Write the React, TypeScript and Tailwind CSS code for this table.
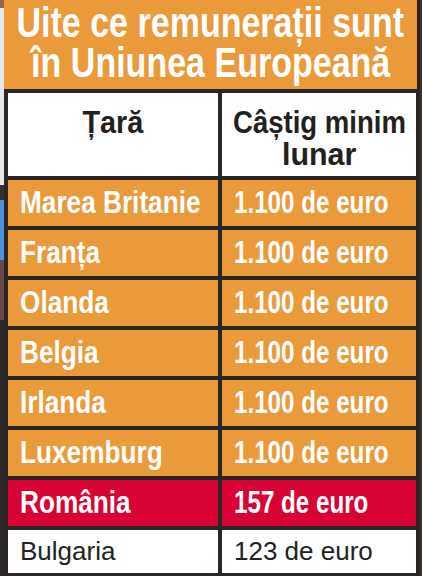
import { Fragment } from "react";

const rows = [
  { country: "Marea Britanie", wage: "1.100 de euro" },
  { country: "Franța", wage: "1.100 de euro" },
  { country: "Olanda", wage: "1.100 de euro" },
  { country: "Belgia", wage: "1.100 de euro" },
  { country: "Irlanda", wage: "1.100 de euro" },
  { country: "Luxemburg", wage: "1.100 de euro" },
];

// no condensed face installed, so squeeze the bold sans horizontally
function Cell({ text, bg, wage }: { text: string; bg: string; wage?: boolean }) {
  return (
    <div
      className={`flex items-center overflow-hidden pl-[12px] font-['Liberation_Sans',Arial,sans-serif] text-[31px] font-bold text-white ${bg}`}
    >
      <span
        className={
          wage
            ? "inline-block origin-left scale-x-[0.78] whitespace-nowrap"
            : "inline-block origin-left scale-x-[0.845] whitespace-nowrap"
        }
      >
        {text}
      </span>
    </div>
  );
}

export default function App() {
  return (
    <div className="flex h-[576px] w-[422px] overflow-hidden bg-[#2b2624]">
      {/* photo edge on the left */}
      <div className="flex w-[4px] flex-col">
        <div className="h-[8px] bg-[#9a6446]" />
        <div className="h-[177px] bg-[#e9e7e6]" />
        <div className="h-[15px] bg-[#35302f]" />
        <div className="h-[60px] bg-[#4f92d6]" />
        <div className="h-[60px] bg-[#6a4a48]" />
        <div className="flex-1 bg-[#2e2a2a]" />
      </div>

      <div className="flex w-[416px] flex-col">
        <div className="mr-[3px] flex h-[89px] flex-col items-center bg-[#ea9a3b] pt-[3px] font-['Liberation_Sans',Arial,sans-serif] text-[42px] font-bold leading-[40px] text-white">
          <span className="inline-block scale-x-[0.81] whitespace-nowrap">Uite ce remunerații sunt</span>
          <span className="inline-block scale-x-[0.81] whitespace-nowrap">în Uniunea Europeană</span>
        </div>

        <div className="grid flex-1 grid-cols-[210px_194px] grid-rows-[83px_repeat(7,46px)_1fr] gap-[4px] bg-[#2b2624] px-[4px] pb-[3px] pt-[4px]">
          <div className="flex flex-col items-center bg-white pt-[13px] font-['Liberation_Sans',Arial,sans-serif] text-[32px] font-bold leading-[32px] text-[#232020]">
            <span className="inline-block scale-x-[0.9] whitespace-nowrap">Țară</span>
          </div>
          <div className="flex flex-col items-center bg-white pt-[13px] font-['Liberation_Sans',Arial,sans-serif] text-[32px] font-bold leading-[32px] text-[#232020]">
            <span className="inline-block scale-x-[0.86] whitespace-nowrap">Câștig minim</span>
            <span className="inline-block scale-x-[0.95] whitespace-nowrap">lunar</span>
          </div>

          {rows.map((r) => (
            <Fragment key={r.country}>
              <Cell text={r.country} bg="bg-[#ea9a3b]" />
              <Cell text={r.wage} bg="bg-[#ea9a3b]" wage />
            </Fragment>
          ))}

          <Cell text="România" bg="bg-[#d90234]" />
          <Cell text="157 de euro" bg="bg-[#d90234]" wage />

          <div className="flex items-center bg-white pl-[12px] font-['Liberation_Sans',Arial,sans-serif] text-[26px] text-[#222]">
            Bulgaria
          </div>
          <div className="flex items-center bg-white pl-[12px] font-['Liberation_Sans',Arial,sans-serif] text-[26px] text-[#222]">
            123 de euro
          </div>
        </div>
      </div>

      <div className="w-[2px] bg-[#3a3534]" />
    </div>
  );
}
